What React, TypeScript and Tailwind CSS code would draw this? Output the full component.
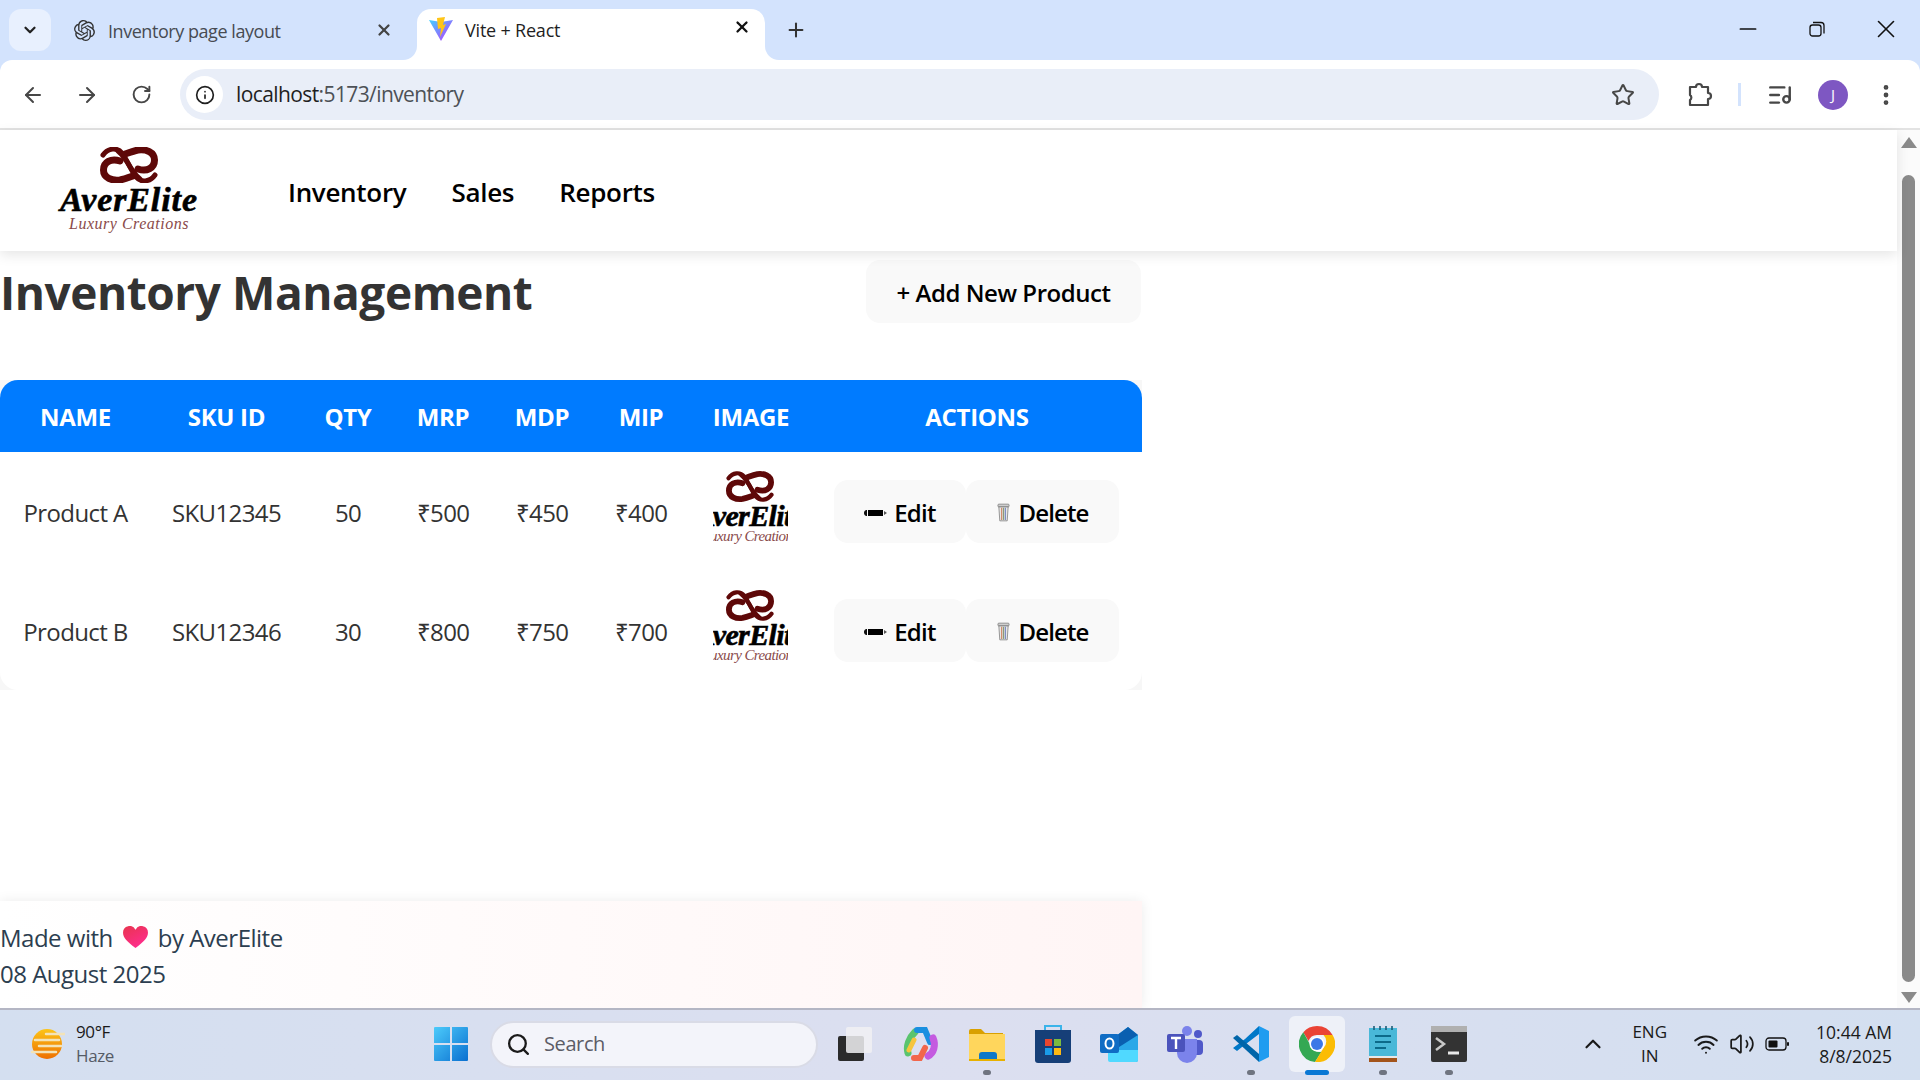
import React from 'react';
import { ArrowLeft, ArrowRight, ChevronDown, ChevronUp, Info, ListMusic, Minus, MoreVertical, Plus, RotateCw, Search, Star, Volume2, Wifi, X } from 'lucide-react';
import { SiOpenai } from 'react-icons/si';

const products = [
  { name: 'Product A', sku: 'SKU12345', qty: 50, mrp: '₹500', mdp: '₹450', mip: '₹400' },
  { name: 'Product B', sku: 'SKU12346', qty: 30, mrp: '₹800', mdp: '₹750', mip: '₹700' },
];

const headers = [
  { label: 'NAME', width: 'w-[151px]' },
  { label: 'SKU ID', width: 'w-[151px]' },
  { label: 'QTY', width: 'w-[92px]' },
  { label: 'MRP', width: 'w-[98px]' },
  { label: 'MDP', width: 'w-[100px]' },
  { label: 'MIP', width: 'w-[98px]' },
  { label: 'IMAGE', width: 'w-[122px]' },
  { label: 'ACTIONS', width: 'w-[330px]' },
];

const EmblemHalf = () => (
  <g>
    <path d="M3 8C8 1 17 0 22 6C27 12 30 24 40 32" strokeWidth="5" />
    <path d="M20 14C11 11 3.500 15 3.500 23C3.500 31 12 34 20 33C25 32 30 30 33 29" strokeWidth="7" />
  </g>
);

const Emblem = ({ className }: { className: string }) => (
  <svg viewBox="0 0 58 36" className={className} fill="none" stroke="#5e0808" strokeLinecap="round">
    <EmblemHalf />
    <g transform="rotate(180 29 18)">
      <EmblemHalf />
    </g>
  </svg>
);

const NavLogo = () => (
  <div className="flex flex-col items-center w-[140px] -mt-[3px] ml-[1px]">
    <Emblem className="w-[58px] h-[36px]" />
    <div className="font-['Liberation_Serif',serif] font-bold italic text-black text-[34px] leading-[33px] tracking-[0.9px] whitespace-nowrap [-webkit-text-stroke:0.6px_black]">AverElite</div>
    <div className="font-['Liberation_Serif',serif] italic text-[#8a4a4a] text-[16px] leading-[16px] tracking-[0.5px] whitespace-nowrap">Luxury  Creations</div>
  </div>
);

const TableLogo = () => (
  <div className="w-[75px] h-[75px] overflow-hidden flex flex-col items-center mb-[7px] mx-auto -translate-x-[1px]">
    <Emblem className="w-[48px] h-[31px] shrink-0" />
    <div className="mt-[1px] font-['Liberation_Serif',serif] font-bold italic text-black text-[30px] leading-[26px] whitespace-nowrap [-webkit-text-stroke:0.6px_black]">AverElite</div>
    <div className="font-['Liberation_Serif',serif] italic text-[#8a4a4a] text-[15px] leading-[14px] whitespace-nowrap">Luxury  Creations</div>
  </div>
);

const Pencil = () => (
  <svg viewBox="0 0 24 8" className="w-[24px] h-[8px]">
    <path d="M0 4a3 3 0 0 1 2-3h1v6H2a3 3 0 0 1-2-3z" fill="#111" />
    <rect x="4" y="1" width="15" height="6" fill="#000" />
    <path d="M20 2l3 2-3 2z" fill="#555" />
  </svg>
);

const Trash = () => (
  <svg viewBox="0 0 14 20" className="w-[13px] h-[19px]">
    <rect x="1" y="1" width="12" height="3" rx="1" fill="#cfcfcf" stroke="#777" strokeWidth="0.8" />
    <path d="M2 4h10l-1 15H3z" fill="#e8e8e8" stroke="#777" strokeWidth="0.8" />
    <path d="M5 5v13" stroke="#d08a6a" strokeWidth="1.300" />
    <path d="M7 5v13" stroke="#8a9a78" strokeWidth="1.300" />
    <path d="M9 5v13" stroke="#7a8ac0" strokeWidth="1.300" />
  </svg>
);

const Heart = () => (
  <svg viewBox="0 0 26 24" className="w-[25px] h-[23px]">
    <defs>
      <linearGradient id="heartFill" x1="0" y1="0" x2="0.6" y2="1">
        <stop offset="0" stopColor="#e8344e" />
        <stop offset="1" stopColor="#ff2d8e" />
      </linearGradient>
    </defs>
    <path d="M13 23C4 16 0 12 0 7a6.800 6.800 0 0 1 13-3 6.800 6.800 0 0 1 13 3c0 5-4 9-13 16z" fill="url(#heartFill)" />
  </svg>
);

const ViteLogo = () => (
  <svg viewBox="0 0 24 24" className="w-[24px] h-[24px]">
    <path d="M0 3l12 2 12-2-12 21z" fill="url(#viteBody)" />
    <path d="M8 1l8-1-2 8 3-1-6 13 1-9-3 1z" fill="#ffc517" />
    <defs>
      <linearGradient id="viteBody" x1="0" y1="0" x2="1" y2="1">
        <stop offset="0" stopColor="#41d1ff" />
        <stop offset="1" stopColor="#bd34fe" />
      </linearGradient>
    </defs>
  </svg>
);

const PuzzleIcon = () => (
  <svg viewBox="0 0 26 26" className="w-[26px] h-[26px]" fill="none" stroke="#474747" strokeWidth="2.200" strokeLinejoin="round">
    <path d="M3 5h6a3 3 0 0 1 6 0h6v6a3 3 0 0 1 0 6v6H3v-5a3 3 0 0 0 0-5z" />
  </svg>
);

const Restore = () => (
  <svg viewBox="0 0 16 16" className="w-[16px] h-[16px]" fill="none" stroke="#111" strokeWidth="1.300">
    <rect x="1" y="4" width="11" height="11" rx="2.500" />
    <path d="M4 1.500h8a3 3 0 0 1 3 3v8" />
  </svg>
);

const WeatherIcon = () => (
  <svg viewBox="0 0 36 32" className="w-[36px] h-[32px]">
    <defs>
      <linearGradient id="sunFill" x1="0" y1="0" x2="0" y2="1">
        <stop offset="0" stopColor="#fcc419" />
        <stop offset="1" stopColor="#ee7000" />
      </linearGradient>
    </defs>
    <circle cx="18" cy="16" r="15" fill="url(#sunFill)" />
    <path d="M17 6h19M6 12h24M3 24h24M10 18h22" stroke="#f3e3b8" strokeWidth="2.500" strokeLinecap="round" />
  </svg>
);

const WindowsLogo = () => (
  <svg viewBox="0 0 34 34" className="w-[34px] h-[34px]">
    <defs>
      <linearGradient id="winFill" x1="0" y1="0" x2="1" y2="1">
        <stop offset="0" stopColor="#4ccbfb" />
        <stop offset="1" stopColor="#0a6fd0" />
      </linearGradient>
    </defs>
    <path d="M0 1a1 1 0 0 1 1-1h15v16H0zM18 0h15a1 1 0 0 1 1 1v15H18zM0 18h16v16H1a1 1 0 0 1-1-1zM18 18h16v15a1 1 0 0 1-1 1H18z" fill="url(#winFill)" />
  </svg>
);

const WidgetsIcon = () => (
  <svg viewBox="0 0 36 36" className="w-[36px] h-[36px]">
    <rect x="1" y="10" width="26" height="25" rx="2" fill="#2b2b2b" />
    <rect x="9" y="1" width="26" height="26" rx="2" fill="#f1f1f3" fillOpacity="0.85" />
  </svg>
);

const CopilotIcon = () => (
  <svg viewBox="0 0 36 36" className="w-[36px] h-[36px]" fill="none" strokeLinecap="round">
    <path d="M12 6C6 12 3 20 5 27" stroke="#5ac46e" strokeWidth="7" />
    <path d="M14 4h8l5 12" stroke="#1a8fe0" strokeWidth="6" />
    <path d="M30 12c3 7 1 15-5 18" stroke="#c45be0" strokeWidth="7" />
    <path d="M22 22l-5 10h-6" stroke="#f2664c" strokeWidth="6" />
    <path d="M6 24l5-10" stroke="#f6c53d" strokeWidth="5" />
  </svg>
);

const FolderIcon = () => (
  <svg viewBox="0 0 36 36" className="w-[36px] h-[36px]">
    <path d="M0 5a2 2 0 0 1 2-2h10l4 4h18v6H0z" fill="#d9a000" />
    <path d="M0 8h36v26H0z" fill="#ffd65c" />
    <path d="M5 34v-5a3 3 0 0 1 3-3h12a3 3 0 0 1 3 3v5z" fill="#0e78c9" transform="translate(5 0)" />
    <path d="M0 33h36v2H0z" fill="#e8b100" />
  </svg>
);

const StoreIcon = () => (
  <svg viewBox="0 0 36 40" className="w-[36px] h-[40px]">
    <path d="M10 6V2h16v4" fill="none" stroke="#3bb4ea" strokeWidth="2" />
    <path d="M0 6h36v30a3 3 0 0 1-3 3H3a3 3 0 0 1-3-3z" fill="#163f78" />
    <rect x="10" y="15" width="7" height="7" fill="#e8462e" />
    <rect x="19" y="15" width="7" height="7" fill="#7cba3f" />
    <rect x="10" y="24" width="7" height="7" fill="#1a9be8" />
    <rect x="19" y="24" width="7" height="7" fill="#fdb913" />
  </svg>
);

const OutlookIcon = () => (
  <svg viewBox="0 0 38 36" className="w-[38px] h-[36px]">
    <path d="M16 10L28 1l10 8v25a2 2 0 0 1-2 2H18z" fill="#2aa8e8" />
    <path d="M16 10L28 1l10 8-22 14z" fill="#0a5fb0" />
    <path d="M8 24h30v10a2 2 0 0 1-2 2H10a2 2 0 0 1-2-2z" fill="#50d9ff" />
    <rect x="0" y="8" width="19" height="19" rx="2" fill="#0f6cc4" />
    <ellipse cx="9.500" cy="17.500" rx="4" ry="5" fill="none" stroke="#fff" strokeWidth="2" />
  </svg>
);

const TeamsIcon = () => (
  <svg viewBox="0 0 36 38" className="w-[36px] h-[38px]">
    <circle cx="20" cy="6" r="5" fill="#7b83eb" />
    <circle cx="31" cy="9" r="4" fill="#5059c9" />
    <rect x="25" y="15" width="11" height="15" rx="4" fill="#5059c9" />
    <path d="M10 14h20v14a10 10 0 0 1-20 0z" fill="#7b83eb" />
    <rect x="0" y="9" width="18" height="18" rx="2" fill="#4b53bc" />
    <path d="M4 13h10M9 13v11" stroke="#fff" strokeWidth="2.400" />
  </svg>
);

const VsCodeIcon = () => (
  <svg viewBox="0 0 36 36" className="w-[36px] h-[36px]">
    <path d="M26 0l10 5v26l-10 5V0z" fill="#1f9cf0" />
    <path d="M26 0v8L9 21l-5 4-4-3 12-9z" fill="#0078c8" />
    <path d="M0 12l4-3 22 19v8z" fill="#0065a9" />
  </svg>
);

const ChromeIcon = () => (
  <svg viewBox="0 0 36 36" className="w-[36px] h-[36px]">
    <path d="M18 0a18 18 0 0 1 15.600 9H18a9 9 0 0 0-8.500 6L4.300 6.300A18 18 0 0 1 18 0z" fill="#ea4335" />
    <path d="M4.300 6.300L13 22a9 9 0 0 0 9.500 3.700L16 36A18 18 0 0 1 4.300 6.300z" fill="#34a853" />
    <path d="M33.600 9A18 18 0 0 1 16 36l8.500-14a9 9 0 0 0 0-13z" fill="#fbbc04" />
    <circle cx="18" cy="18" r="7.500" fill="#fff" />
    <circle cx="18" cy="18" r="6" fill="#3b78e7" />
  </svg>
);

const NotepadIcon = () => (
  <svg viewBox="0 0 28 36" className="w-[28px] h-[36px]">
    <path d="M0 2h28v28H0z" fill="#49b8d8" />
    <path d="M5 0v4M11 0v4M17 0v4M23 0v4" stroke="#1b5d78" strokeWidth="1.600" />
    <path d="M6 10h16M6 16h16M6 22h11" stroke="#0c6a8a" strokeWidth="2" />
    <rect x="0" y="30" width="28" height="2" fill="#e8e8e8" />
    <rect x="0" y="32" width="28" height="4" fill="#a3541b" />
  </svg>
);

const TerminalIcon = () => (
  <svg viewBox="0 0 36 36" className="w-[36px] h-[36px]">
    <rect x="0" y="0" width="36" height="36" rx="2" fill="#333" />
    <rect x="0" y="0" width="36" height="6" fill="#b0b0b0" />
    <path d="M5 12l8 6-8 6" fill="none" stroke="#c8c8c8" strokeWidth="2.500" />
    <path d="M17 27h11" stroke="#e8e8e8" strokeWidth="3" />
  </svg>
);

const BatteryIcon = () => (
  <svg viewBox="0 0 24 14" className="w-[24px] h-[14px]">
    <rect x="1" y="1" width="20" height="12" rx="3" fill="none" stroke="#111" strokeWidth="1.300" />
    <rect x="3.500" y="3.500" width="9" height="7" rx="1" fill="#111" />
    <rect x="22" y="5" width="2" height="4" rx="1" fill="#111" />
  </svg>
);

const taskbarApps = [
  { key: 'widgets', icon: <WidgetsIcon />, running: false },
  { key: 'copilot', icon: <CopilotIcon />, running: false },
  { key: 'folder', icon: <FolderIcon />, running: true },
  { key: 'store', icon: <StoreIcon />, running: false },
  { key: 'outlook', icon: <OutlookIcon />, running: false },
  { key: 'teams', icon: <TeamsIcon />, running: false },
  { key: 'vscode', icon: <VsCodeIcon />, running: true },
  { key: 'chrome', icon: <ChromeIcon />, running: false },
  { key: 'notepad', icon: <NotepadIcon />, running: true },
  { key: 'terminal', icon: <TerminalIcon />, running: true },
];

const App: React.FC = () => {
  return (
    <div className="h-screen w-full flex flex-col overflow-hidden bg-white font-['Open_Sans',sans-serif]">
      {/* Chrome tab strip */}
      <div className="h-[60px] shrink-0 bg-[#d3e3fd] flex pl-[9px] pt-[9px]">
        <div className="w-[42px] h-[42px] rounded-xl bg-[#e8f0fe] flex items-center justify-center">
          <ChevronDown size={18} strokeWidth={3} className="text-[#222]" />
        </div>
        <div className="w-[366px] h-[42px] flex items-center pl-[23px] pr-[24px]">
          <SiOpenai size={21} className="text-[#333]" />
          <span className="ml-[13px] mt-[2px] text-[18px] text-[#474b52] tracking-[-0.45px]">Inventory page layout</span>
          <X size={18} strokeWidth={3} className="ml-auto text-[#444]" />
        </div>
        <div className="relative w-[348px] h-[51px] bg-white rounded-t-[14px] flex items-start pt-[8px] pl-[12px] pr-[14px]">
          <div className="absolute -left-[14px] bottom-0 w-[14px] h-[14px] bg-white">
            <div className="w-full h-full bg-[#d3e3fd] rounded-br-[14px]" />
          </div>
          <div className="absolute -right-[14px] bottom-0 w-[14px] h-[14px] bg-white">
            <div className="w-full h-full bg-[#d3e3fd] rounded-bl-[14px]" />
          </div>
          <ViteLogo />
          <span className="ml-[12px] text-[18px] text-[#1f1f1f] tracking-[-0.2px]">Vite + React</span>
          <X size={18} strokeWidth={3} className="ml-auto mt-[1px] text-[#111]" />
        </div>
        <div className="h-[42px] flex items-center ml-[20px]">
          <Plus size={22} strokeWidth={2.2} className="text-[#333]" />
        </div>
        <div className="ml-auto flex h-[42px] items-center pb-[2px]">
          <div className="w-[69px] flex justify-center"><Minus size={26} strokeWidth={1.6} className="text-[#111]" /></div>
          <div className="w-[69px] flex justify-center"><Restore /></div>
          <div className="w-[69px] flex justify-center"><X size={30} strokeWidth={1.3} className="text-[#111]" /></div>
        </div>
      </div>

      {/* Chrome toolbar */}
      <div className="h-[70px] shrink-0 bg-[#d3e3fd]">
        <div className="h-full bg-white rounded-t-[12px] border-b-2 border-[#e3e3e3] flex items-start pl-[6px] pt-[9px]">
          <div className="w-[54px] h-[51px] flex items-center justify-center"><ArrowLeft size={24} strokeWidth={2} className="text-[#474747]" /></div>
          <div className="w-[54px] h-[51px] flex items-center justify-center"><ArrowRight size={24} strokeWidth={2} className="text-[#474747]" /></div>
          <div className="w-[54px] h-[51px] flex items-center justify-center"><RotateCw size={21} strokeWidth={2.2} className="text-[#474747]" /></div>
          <div className="ml-[12px] w-[1479px] h-[51px] rounded-full bg-[#e9eef8] flex items-center pl-[6px] pr-[24px]">
            <div className="w-[37px] h-[37px] rounded-full bg-white flex items-center justify-center">
              <Info size={20} strokeWidth={2} className="text-[#1f1f1f]" />
            </div>
            <span className="ml-[13px] text-[21px] text-[#1f1f1f] tracking-[-0.6px]">localhost<span className="text-[#4d5156]">:5173/inventory</span></span>
            <Star size={24} strokeWidth={2} className="ml-auto text-[#474747]" />
          </div>
          <div className="h-[51px] ml-[28px] flex items-center"><PuzzleIcon /></div>
          <div className="ml-[25px] mt-[14px] w-[3px] h-[23px] bg-[#d3e3fd]" />
          <div className="h-[51px] ml-[26px] flex items-center"><ListMusic size={26} strokeWidth={2.2} className="text-[#474747]" /></div>
          <div className="h-[51px] ml-[25px] flex items-center">
            <div className="w-[30px] h-[30px] rounded-full bg-[#7e57c2] flex items-center justify-center text-white text-[15px]">J</div>
          </div>
          <div className="h-[51px] ml-[25px] flex items-center"><MoreVertical size={26} strokeWidth={2.4} className="text-[#474747]" /></div>
        </div>
      </div>

      {/* Page viewport */}
      <div className="flex-1 min-h-0 flex">
        <div className="flex-1 min-w-0 flex flex-col">
          <nav className="relative z-10 h-[121px] shrink-0 bg-white shadow-[0_4px_12px_rgba(0,0,0,0.1)] flex items-center pl-[58px]">
            <NavLogo />
            <div className="ml-[89px] mt-[4px] flex gap-[45px] text-[26px] font-[550] text-black tracking-[-0.3px]">
              <span>Inventory</span>
              <span>Sales</span>
              <span>Reports</span>
            </div>
          </nav>

          <main className="w-[1142px] flex-1 flex flex-col">
            <div className="flex items-start justify-between pt-[9px] pr-[1px]">
              <h1 className="h-[63px] text-[46px] leading-[65px] font-bold text-[#333] tracking-[-0.45px]">Inventory Management</h1>
              <button className="w-[275px] h-[63px] rounded-[14px] bg-[#f9f9f9] text-[24px] text-black font-[550] tracking-[-0.45px] pt-[2px]">+ Add New Product</button>
            </div>

            <div className="mt-[57px] bg-[#f7f7f7]">
              <div className="rounded-[18px] bg-white overflow-hidden">
                <table className="w-full table-fixed border-collapse">
                  <thead>
                    <tr className="h-[72px] bg-[#007bff] text-white text-[24px]">
                      {headers.map((h) => (
                        <th key={h.label} className={`${h.width} font-bold tracking-[-0.3px] pt-[1px]`}>{h.label}</th>
                      ))}
                    </tr>
                  </thead>
                  <tbody>
                    {products.map((p) => (
                      <tr key={p.sku} className="h-[119px] text-[24px] text-[#333] text-center tracking-[-0.6px]">
                        <td className="pt-[2px]">{p.name}</td>
                        <td className="pt-[2px]">{p.sku}</td>
                        <td className="pt-[2px]">{p.qty}</td>
                        <td className="pt-[2px]">{p.mrp}</td>
                        <td className="pt-[2px]">{p.mdp}</td>
                        <td className="pt-[2px]">{p.mip}</td>
                        <td><TableLogo /></td>
                        <td>
                          <div className="flex pl-[22px]">
                            <button className="w-[132px] h-[63px] rounded-[14px] bg-[#f9f9f9] text-black flex items-center justify-center gap-[6px] font-[550] tracking-[-0.7px] pt-[2px]">
                              <Pencil /> Edit
                            </button>
                            <button className="w-[153px] h-[63px] rounded-[14px] bg-[#f9f9f9] text-black flex items-center justify-center gap-[9px] font-[550] tracking-[-0.9px] pt-[2px]">
                              <Trash /> Delete
                            </button>
                          </div>
                        </td>
                      </tr>
                    ))}
                  </tbody>
                </table>
              </div>
            </div>

            <footer className="mt-auto h-[107px] bg-gradient-to-r from-white to-[#fff5f5] shadow-[0_0_12px_rgba(0,0,0,0.08)] flex flex-col justify-center text-[24px] leading-[36px] text-[#2c3e50] tracking-[-0.5px] pt-[2px]">
              <div className="flex items-center">Made with <span className="mx-[10px] flex"><Heart /></span> by AverElite</div>
              <div>08 August 2025</div>
            </footer>
          </main>
        </div>

        {/* Scrollbar */}
        <div className="w-[23px] shrink-0 bg-[#fbfbfb] flex flex-col items-center pt-[7px] pb-[5px]">
          <div className="w-0 h-0 border-l-[8px] border-r-[8px] border-b-[11px] border-l-transparent border-r-transparent border-b-[#8a8a8a]" />
          <div className="mt-[27px] w-[13px] flex-1 rounded-full bg-[#8a8a8a]" />
          <div className="mt-[10px] w-0 h-0 border-l-[8px] border-r-[8px] border-t-[11px] border-l-transparent border-r-transparent border-t-[#8a8a8a]" />
        </div>
      </div>

      {/* Windows taskbar */}
      <div className="h-[72px] shrink-0 border-t-2 border-[#b4b6c4] bg-gradient-to-r from-[#d4dff0] via-[#dcdff0] to-[#d3dff0] flex items-center pb-[2px]">
        <div className="w-[434px] shrink-0 flex items-center pl-[29px]">
          <WeatherIcon />
          <div className="ml-[11px] flex flex-col text-[17px] leading-[24px] tracking-[-0.4px]">
            <span className="text-[#1a1a1a]">90°F</span>
            <span className="text-[#555b66]">Haze</span>
          </div>
        </div>
        <WindowsLogo />
        <div className="ml-[22px] w-[328px] h-[47px] rounded-full bg-[#f3f4fa] border-2 border-[#d9dbe6] flex items-center pl-[14px]">
          <Search size={25} strokeWidth={2.2} className="text-[#1a1a1a]" />
          <span className="ml-[13px] text-[20px] text-[#5c5c66] tracking-[-0.4px]">Search</span>
        </div>
        <div className="ml-[4px] flex">
          {taskbarApps.map((app) => (
            <div key={app.key} className="relative w-[66px] h-[56px] flex items-center justify-center">
              {app.key === 'chrome' && <div className="absolute left-[5px] top-0 w-[56px] h-[56px] rounded-md bg-[#eef1f8]" />}
              <div className="relative flex">{app.icon}</div>
              {app.running && <div className="absolute left-[29px] -bottom-[3px] w-[8px] h-[5px] rounded-full bg-[#6f7480]" />}
              {app.key === 'chrome' && <div className="absolute left-[21px] -bottom-[3px] w-[24px] h-[5px] rounded-full bg-[#0a78d4]" />}
            </div>
          ))}
        </div>
        <div className="ml-auto flex items-center pr-[28px] text-[#1a1a1a]">
          <ChevronUp size={26} strokeWidth={2} />
          <div className="ml-[26px] flex flex-col items-center text-[17px] leading-[24px]">
            <span>ENG</span>
            <span>IN</span>
          </div>
          <Wifi size={26} strokeWidth={1.8} className="ml-[26px]" />
          <Volume2 size={26} strokeWidth={1.6} className="ml-[10px]" />
          <div className="ml-[10px] flex"><BatteryIcon /></div>
          <div className="ml-[27px] flex flex-col items-end text-[17.500px] leading-[24px]">
            <span>10:44 AM</span>
            <span>8/8/2025</span>
          </div>
        </div>
      </div>
    </div>
  );
};

export default App;
